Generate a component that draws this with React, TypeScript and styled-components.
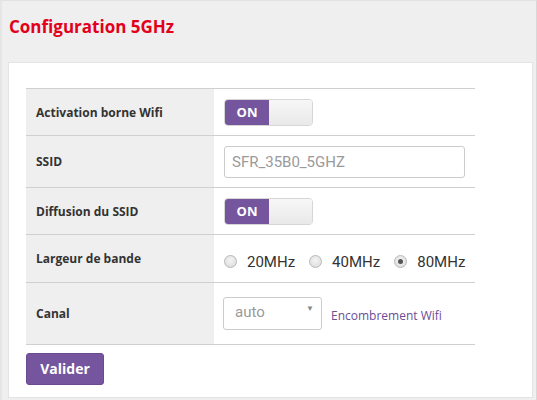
import React from "react";
import styled, { createGlobalStyle } from "styled-components";

const Global = createGlobalStyle`
  html, body { margin: 0; padding: 0; }
  body { background: #efefef; font-family: "Open Sans", sans-serif; }
  * { box-sizing: border-box; }
`;

const Page = styled.div`
  width: 537px;
  height: 400px;
  border-top: 1px solid #e2e2e2;
  border-left: 2px solid #e6e6e6;
  border-right: 1px solid #d8d8d8;
  padding: 0 3px 0 6px;
  overflow: hidden;
`;

const Title = styled.h1`
  margin: 0;
  padding: 14px 0 0 1px;
  height: 61px;
  font-family: "Open Sans", sans-serif;
  font-weight: 700;
  font-size: 17px;
  color: #e2001a;
`;

const Panel = styled.div`
  background: #fff;
  border: 1px solid #e4e4e4;
  height: 336px;
  padding: 25px 0 0 17px;
`;

const Table = styled.div`
  width: 449px;
  border-bottom: 1px solid #cfcfcf;
`;

const Row = styled.div<{ $h: number }>`
  display: grid;
  grid-template-columns: 188px 1fr;
  height: ${(p) => p.$h}px;
  border-top: 1px solid #cfcfcf;
`;

const Label = styled.div`
  background: #efefef;
  display: flex;
  align-items: center;
  padding-left: 10px;
  font-family: "Open Sans", sans-serif;
  font-weight: 700;
  font-size: 12px;
  color: #333;
`;

const Cell = styled.div`
  display: flex;
  align-items: center;
  padding-left: 10px;
`;

const Toggle = styled.div`
  display: flex;
  width: 89px;
  height: 27px;
  border-radius: 4px;
  overflow: hidden;
  border: 1px solid #d6d6d6;
`;

const ToggleOn = styled.div`
  width: 44px;
  background: #76559f;
  color: #fff;
  font-family: "Open Sans", sans-serif;
  font-weight: 700;
  font-size: 13px;
  display: flex;
  align-items: center;
  justify-content: center;
`;

const ToggleOff = styled.div`
  flex: 1;
  background: linear-gradient(#f7f7f7, #e9e9e9);
`;

const TextInput = styled.div`
  width: 241px;
  height: 32px;
  border: 1px solid #cccccc;
  border-radius: 3px;
  display: flex;
  align-items: center;
  padding-left: 7px;
  font-family: Roboto, sans-serif;
  font-size: 15px;
  color: #9a9a9a;
`;

const Radios = styled.div`
  display: flex;
  align-items: center;
  padding-top: 6px;
  gap: 14px;
`;

const RadioItem = styled.label`
  display: flex;
  align-items: center;
  gap: 10px;
  font-family: Roboto, sans-serif;
  font-size: 15px;
  color: #333;
`;

const RadioDot = styled.span<{ $checked?: boolean }>`
  width: 13px;
  height: 13px;
  border-radius: 50%;
  border: 1px solid #b8b8b8;
  background: radial-gradient(circle at 50% 40%, #f4f4f4, #d9d9d9);
  display: flex;
  align-items: center;
  justify-content: center;
  &::after {
    content: "";
    display: ${(p) => (p.$checked ? "block" : "none")};
    width: 5px;
    height: 5px;
    border-radius: 50%;
    background: #555;
  }
`;

const CanalCell = styled(Cell)`
  padding-left: 9px;
  gap: 9px;
`;

const Select = styled.div`
  width: 99px;
  height: 33px;
  border: 1px solid #cccccc;
  border-radius: 3px;
  display: flex;
  align-items: center;
  justify-content: space-between;
  padding: 0 7px 4px 11px;
  font-family: Roboto, sans-serif;
  font-size: 15px;
  color: #9a9a9a;
`;

const Caret = styled.span`
  font-size: 8px;
  color: #888;
  margin-top: -6px;
`;

const Link = styled.a`
  font-family: "Open Sans", sans-serif;
  font-size: 12px;
  color: #6a4d97;
  text-decoration: none;
  padding-top: 3px;
`;

const Button = styled.button`
  margin-top: 8px;
  width: 78px;
  height: 32px;
  background: #76559f;
  border: 1px solid #6a4b92;
  border-radius: 3px;
  color: #fff;
  font-family: "Open Sans", sans-serif;
  font-weight: 700;
  font-size: 14px;
  padding: 0 0 2px;
`;

export default function App() {
  return (
    <>
      <Global />
      <Page>
        <Title>Configuration 5GHz</Title>
        <Panel>
          <Table>
            <Row $h={47}>
              <Label>Activation borne Wifi</Label>
              <Cell>
                <Toggle>
                  <ToggleOn>ON</ToggleOn>
                  <ToggleOff />
                </Toggle>
              </Cell>
            </Row>
            <Row $h={52}>
              <Label>SSID</Label>
              <Cell>
                <TextInput>SFR_35B0_5GHZ</TextInput>
              </Cell>
            </Row>
            <Row $h={47}>
              <Label>Diffusion du SSID</Label>
              <Cell>
                <Toggle>
                  <ToggleOn>ON</ToggleOn>
                  <ToggleOff />
                </Toggle>
              </Cell>
            </Row>
            <Row $h={48}>
              <Label>Largeur de bande</Label>
              <Cell>
                <Radios>
                  <RadioItem><RadioDot />20MHz</RadioItem>
                  <RadioItem><RadioDot />40MHz</RadioItem>
                  <RadioItem><RadioDot $checked />80MHz</RadioItem>
                </Radios>
              </Cell>
            </Row>
            <Row $h={62}>
              <Label>Canal</Label>
              <CanalCell>
                <Select>
                  auto
                  <Caret>▼</Caret>
                </Select>
                <Link>Encombrement Wifi</Link>
              </CanalCell>
            </Row>
          </Table>
          <Button>Valider</Button>
        </Panel>
      </Page>
    </>
  );
}
